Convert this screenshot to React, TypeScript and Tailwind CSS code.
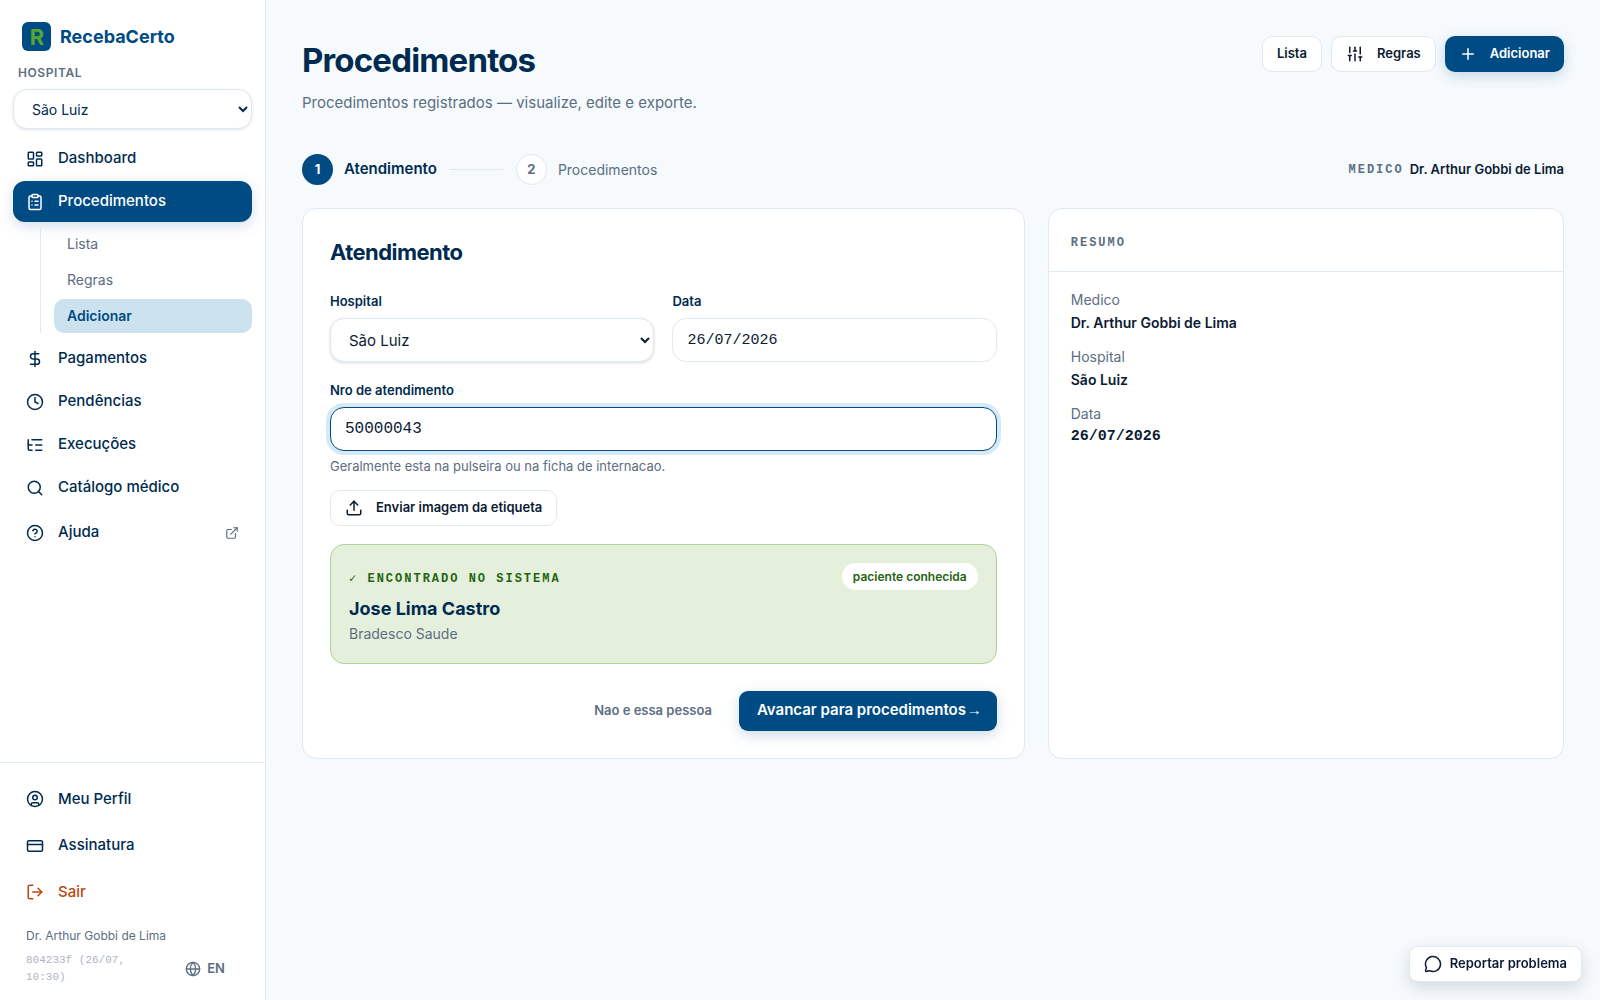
import type { ReactNode } from 'react'
import { clsx } from 'clsx'
import {
  CircleHelp, CircleUser, ClipboardList, Clock, CreditCard, DollarSign, ExternalLink, Globe,
  LayoutDashboard, ListTree, LogOut, MessageCircle, Plus, Search, SlidersVertical, Upload,
  type LucideIcon,
} from 'lucide-react'

const MONO = "font-['Liberation_Mono',monospace]"

function NavItem({
  icon: Icon,
  label,
  active,
  className,
  children,
}: {
  icon: LucideIcon
  label: string
  active?: boolean
  className?: string
  children?: ReactNode
}) {
  return (
    <a
      href="#"
      className={clsx(
        'flex items-center gap-3.5 rounded-xl px-[13px] text-[15px] font-medium',
        active && 'bg-[#004b83] text-white shadow-[0_4px_14px_rgba(0,75,131,0.18)]',
        className ?? 'h-[41px]',
      )}
    >
      <Icon className="size-[18px] shrink-0" strokeWidth={2} />
      {label}
      {children}
    </a>
  )
}

function SubItem({ label, active }: { label: string; active?: boolean }) {
  return (
    <a
      href="#"
      className={clsx(
        'flex h-[34px] items-center rounded-[10px] px-[13px] text-sm',
        active ? 'bg-[#cde2ef] font-semibold text-[#004b83]' : 'text-[#5b6e82]',
      )}
    >
      {label}
    </a>
  )
}

function Sidebar() {
  return (
    <aside className="sticky top-0 flex h-screen w-[266px] shrink-0 flex-col border-r border-[#dfe9f1] bg-white text-[#002b50]">
      <div className="flex flex-1 flex-col px-[13px]">
        <div className="mt-[22px] flex items-center gap-[9px] pl-[9px]">
          <svg viewBox="0 0 29 29" className="size-[29px]" aria-hidden>
            <rect width="29" height="29" rx="6" fill="#004b83" />
            <text x="15" y="23" textAnchor="middle" fontSize="22" fontWeight="700" fill="#55a630" fontFamily="Inter">
              R
            </text>
          </svg>
          <span className="text-lg font-bold text-[#004b83]">RecebaCerto</span>
        </div>

        <label htmlFor="hospital-nav" className="mt-[13px] pl-[5px] text-xs leading-[18px] font-semibold tracking-wider text-[#5b6e82]">
          HOSPITAL
        </label>
        <select
          id="hospital-nav"
          className="mt-[7px] h-10 rounded-[14px] border border-[#dfe9f1] bg-white px-3.5 text-sm shadow-[0_1px_3px_rgba(0,43,80,0.12)]"
        >
          <option>São Luiz</option>
        </select>

        <nav className="mt-[9px] flex flex-col gap-0.5">
          <NavItem icon={LayoutDashboard} label="Dashboard" />
          <NavItem icon={ClipboardList} label="Procedimentos" active />
          <div className="mt-[3px] mb-[3px] ml-[27px] flex flex-col gap-0.5 border-l border-[#dfe9f1] pl-[13px]">
            <SubItem label="Lista" />
            <SubItem label="Regras" />
            <SubItem label="Adicionar" active />
          </div>
          <NavItem icon={DollarSign} label="Pagamentos" />
          <NavItem icon={Clock} label="Pendências" />
          <NavItem icon={ListTree} label="Execuções" />
          <NavItem icon={Search} label="Catálogo médico" />
          <NavItem icon={CircleHelp} label="Ajuda" className="h-[45px]">
            <ExternalLink className="ml-auto size-3.5 text-[#5b6e82]" />
          </NavItem>
        </nav>
      </div>

      <div className="flex flex-col border-t border-[#dfe9f1] px-[13px] pt-[13px] pb-3.5">
        <NavItem icon={CircleUser} label="Meu Perfil" className="h-[46px]" />
        <NavItem icon={CreditCard} label="Assinatura" className="h-[47px]" />
        <NavItem icon={LogOut} label="Sair" className="h-[46px] text-[#b9480e]" />
        <p className="mt-[11px] px-[13px] text-xs leading-5 text-[#5b6e82]">Dr. Arthur Gobbi de Lima</p>
        <div className="mt-1.5 flex items-center justify-between pr-[27px] pl-[13px]">
          <span className={clsx(MONO, 'w-[120px] text-[11px] leading-[17px] text-[#acb5bf]')}>
            804233f (26/07, 10:30)
          </span>
          <button type="button" className="flex items-center gap-1.5 text-[13px] font-semibold text-[#5b6e82]">
            <Globe className="size-4" strokeWidth={2} />
            EN
          </button>
        </div>
      </div>
    </aside>
  )
}

const outlineBtn =
  'flex h-9 items-center gap-[13px] rounded-[10px] border border-[#dfe9f1] bg-white px-3.5 text-[13px] font-semibold text-[#0b1b33]'

function PageHeader() {
  return (
    <header className="flex items-start justify-between">
      <div>
        <h1 className="mt-1 text-[33px] leading-10 font-bold tracking-tight text-[#002b50]">Procedimentos</h1>
        <p className="mt-[11px] text-[15px] leading-6 text-[#5b6e82]">
          Procedimentos registrados — visualize, edite e exporte.
        </p>
      </div>
      <div className="flex gap-[9px]">
        <button type="button" className={outlineBtn}>Lista</button>
        <button type="button" className={outlineBtn}>
          <SlidersVertical className="size-[18px]" />
          Regras
        </button>
        <button
          type="button"
          className="flex h-9 items-center gap-[13px] rounded-[10px] bg-[#004b83] px-3.5 text-[13px] font-semibold text-white shadow-[0_4px_14px_rgba(0,75,131,0.2)]"
        >
          <Plus className="size-[18px]" />
          Adicionar
        </button>
      </div>
    </header>
  )
}

function Stepper() {
  return (
    <div className="mt-[39px] flex items-center justify-between">
      <ol className="flex items-center">
        <li className="flex items-center gap-[11px] text-[15px] font-semibold text-[#002b50]">
          <span className="flex size-[31px] items-center justify-center rounded-full bg-[#004b83] text-[13px] font-bold text-white">
            1
          </span>
          Atendimento
        </li>
        <li aria-hidden className="mx-[13px] h-px w-[53px] bg-[#dfe9f1]" />
        <li className="flex items-center gap-[11px] text-sm text-[#5b6e82]">
          <span className="flex size-[31px] items-center justify-center rounded-full border border-[#dfe9f1] bg-white text-[13px] font-bold">
            2
          </span>
          Procedimentos
        </li>
      </ol>
      <p className="flex items-center gap-1.5 text-[13px] font-semibold text-[#0b1b33]">
        <span className={clsx(MONO, 'text-xs font-bold tracking-[2px] text-[#5b6e82]')}>MEDICO</span>
        Dr. Arthur Gobbi de Lima
      </p>
    </div>
  )
}

const labelCls = 'text-[13px] leading-5 font-semibold text-[#002b50]'

function AttendanceCard() {
  return (
    <section className="rounded-[14px] border border-[#dfe9f1] bg-white p-[27px]">
      <h2 className="text-[22px] leading-8 font-bold tracking-tight text-[#002b50]">Atendimento</h2>

      <div className="mt-[23px] grid grid-cols-2 gap-[18px]">
        <div className="flex flex-col gap-[7px]">
          <label htmlFor="hospital" className={labelCls}>Hospital</label>
          <select
            id="hospital"
            className="h-11 rounded-[14px] border border-[#dfe9f1] bg-white px-3.5 text-[15px] text-[#0b1b33] shadow-[0_1px_3px_rgba(0,43,80,0.16)]"
          >
            <option>São Luiz</option>
          </select>
        </div>
        <div className="flex flex-col gap-[7px]">
          <label htmlFor="data" className={labelCls}>Data</label>
          <input
            id="data"
            defaultValue="26/07/2026"
            className={clsx(MONO, 'h-11 rounded-[14px] border border-[#dfe9f1] bg-white px-3.5 text-[15px] text-[#0b1b33]')}
          />
        </div>
      </div>

      <div className="mt-[18px] flex flex-col">
        <label htmlFor="nro" className={labelCls}>Nro de atendimento</label>
        <input
          id="nro"
          defaultValue="50000043"
          aria-describedby="nro-hint"
          className={clsx(
            MONO,
            'mt-[7px] h-11 rounded-[14px] border border-[#004b83] bg-white px-3.5 text-base text-[#0b1b33] shadow-[0_0_0_4px_#d6e9f7]',
          )}
        />
        <p id="nro-hint" className="mt-[5px] text-[13px] leading-5 text-[#5b6e82]">
          Geralmente esta na pulseira ou na ficha de internacao.
        </p>
      </div>

      <button type="button" className={clsx(outlineBtn, 'mt-3.5')}>
        <Upload className="size-[18px]" />
        Enviar imagem da etiqueta
      </button>

      <div className="mt-[18px] flex items-start justify-between rounded-[14px] border border-[#a9d493] bg-[#e5f0dc] p-[18px]">
        <div>
          <p className={clsx(MONO, 'mt-1.5 text-xs leading-5 font-bold tracking-[2px] text-[#1f6410]')}>
            ✓ ENCONTRADO NO SISTEMA
          </p>
          <p className="mt-1.5 text-lg leading-7 font-bold text-[#002b50]">Jose Lima Castro</p>
          <p className="text-sm leading-[22px] text-[#5b6e82]">Bradesco Saude</p>
        </div>
        <span className="rounded-full bg-white px-[11px] text-xs leading-[27px] font-semibold text-[#1f6410]">
          paciente conhecida
        </span>
      </div>

      <div className="mt-[27px] flex items-center justify-end gap-[27px]">
        <button type="button" className="text-[13px] font-semibold text-[#5b6e82]">Nao e essa pessoa</button>
        <button
          type="button"
          className="h-10 rounded-[9px] bg-[#004b83] px-[18px] text-[15px] font-semibold text-white shadow-[0_4px_14px_rgba(0,75,131,0.2)]"
        >
          Avancar para procedimentos <span className={clsx(MONO, 'font-normal')}>→</span>
        </button>
      </div>
    </section>
  )
}

function SummaryCard() {
  return (
    <aside className="rounded-[14px] border border-[#dfe9f1] bg-white">
      <h2 className={clsx(MONO, 'border-b border-[#dfe9f1] px-[22px] pt-[25px] pb-[19px] text-xs leading-[18px] font-bold tracking-[2px] text-[#5b6e82]')}>
        RESUMO
      </h2>
      <dl className="px-[22px] pt-4 text-sm text-[#5b6e82]">
        <dt className="leading-[23px]">Medico</dt>
        <dd className="mb-[11px] leading-[23px] font-semibold text-[#0b1b33]">Dr. Arthur Gobbi de Lima</dd>
        <dt className="leading-[23px]">Hospital</dt>
        <dd className="mb-[11px] leading-[23px] font-semibold text-[#0b1b33]">São Luiz</dd>
        <dt className="leading-[23px]">Data</dt>
        <dd className={clsx(MONO, 'text-[15px] leading-[23px] font-bold text-[#0b1b33]')}>26/07/2026</dd>
      </dl>
    </aside>
  )
}

export default function App() {
  return (
    <div className="flex min-h-screen bg-[#f6fafd] font-['Inter',sans-serif] antialiased">
      <Sidebar />
      <main className="min-w-0 flex-1 px-9 pt-9 pb-20">
        <PageHeader />
        <Stepper />
        <div className="mt-[23px] grid grid-cols-[1.4fr_1fr] gap-[23px]">
          <AttendanceCard />
          <SummaryCard />
        </div>
      </main>
      {/* floating feedback button */}
      <button
        type="button"
        className="fixed right-[18px] bottom-[18px] flex h-9 items-center gap-2 rounded-[9px] border border-[#dfe9f1] bg-white px-3.5 text-[13px] font-semibold text-[#0b1b33] shadow-[0_6px_16px_rgba(11,27,51,0.14)]"
      >
        <MessageCircle className="size-[18px]" />
        Reportar problema
      </button>
    </div>
  )
}
